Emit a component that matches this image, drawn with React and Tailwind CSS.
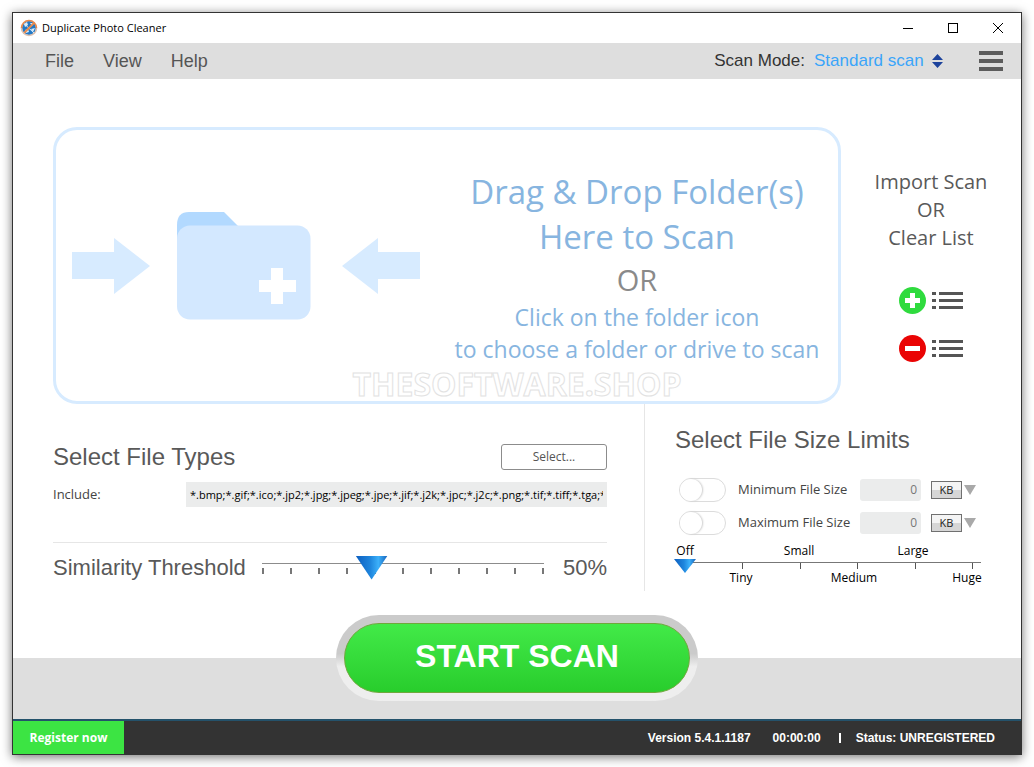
import { useState } from "react";

const fileTypes =
  "*.bmp;*.gif;*.ico;*.jp2;*.jpg;*.jpeg;*.jpe;*.jif;*.j2k;*.jpc;*.j2c;*.png;*.tif;*.tiff;*.tga;*.wbmp;*.webp";

const AppLogo = () => (
  <svg width="18" height="18" viewBox="0 0 18 18" aria-hidden="true">
    <circle cx="9" cy="9" r="7" fill="#2279c6" />
    <path d="M4 5l3-2 1 3-3 2zM10 4h3l-1 3zM5 11l3-1 1 3-3 1zM11 10l4-1-2 4z" fill="#dcecf8" />
    <path d="M3.5 4L14 14" stroke="#dcecf8" strokeWidth="1" />
    <path d="M14.5 3.5l-11 11" stroke="#e98a4c" strokeWidth="1.8" />
    <path d="M1.5 9a7.5 7.5 0 0 1 15 0" fill="none" stroke="#e98a4c" strokeWidth="1.6" />
    <path d="M1.5 9a7.5 7.5 0 0 0 15 0" fill="none" stroke="#dcc0b0" strokeWidth="1.6" />
  </svg>
);

const Arrow = ({ flip }) => (
  <svg width="78" height="56" viewBox="0 0 78 56" className={flip ? "-scale-x-100" : ""} aria-hidden="true">
    <path d="M0 14h42V0l36 28-36 28V41H0z" fill="#d7ebff" />
  </svg>
);

const Folder = () => (
  <svg width="134" height="108" viewBox="0 0 134 108" aria-hidden="true">
    <path d="M0 28V13Q0 0 12 0H47L62 15V28z" fill="#b2d9ff" />
    <rect y="13.5" width="133.5" height="94" rx="13" fill="#d3e8ff" />
    <path d="M94 56h12v12h13v12h-13v12H94V80H82V68h12z" fill="#fff" />
  </svg>
);

const ListIcon = () => (
  <svg width="31" height="19" viewBox="0 -1 31 19" fill="#555" aria-hidden="true">
    <path d="M0 0h4v3H0zM7 0h24v3H7zM0 7h4v3H0zM7 7h24v3H7zM0 14h4v3H0zM7 14h24v3H7z" />
  </svg>
);

const TitleBar = () => (
  <header className="flex h-[30px] items-center justify-between bg-white pl-[7px]">
    <div className="flex items-center gap-1">
      <AppLogo />
      <h1 className="text-[11px] text-black">Duplicate Photo Cleaner</h1>
    </div>
    <div className="flex h-full">
      <button aria-label="Minimize" className="flex w-[45px] items-center justify-center">
        <span className="w-[10px] border-t border-black" />
      </button>
      <button aria-label="Maximize" className="flex w-[45px] items-center justify-center">
        <span className="size-[10px] border border-black" />
      </button>
      <button aria-label="Close" className="flex w-[46px] items-center justify-center">
        <svg width="10" height="10" viewBox="0 0 10 10" stroke="#000" aria-hidden="true">
          <path d="M0 0l10 10M10 0L0 10" />
        </svg>
      </button>
    </div>
  </header>
);

const MenuBar = () => (
  <div className="flex h-9 items-center justify-between bg-[#dedede] pr-[18px] pl-8 font-['Liberation_Sans',sans-serif]">
    <nav className="flex gap-[29px] text-[18px] text-[#555]">
      <button>File</button>
      <button>View</button>
      <button>Help</button>
    </nav>
    <div className="flex items-center">
      <label htmlFor="scan-mode" className="mr-[9px] text-[17px] text-[#333]">
        Scan Mode:
      </label>
      <select id="scan-mode" className="appearance-none text-[17px] text-[#3aa5fa]">
        <option>Standard scan</option>
      </select>
      <svg width="11" height="14" viewBox="0 0 11 14" fill="#1d439c" className="ml-2" aria-hidden="true">
        <path d="M5.5 0L11 6H0zM5.5 14L0 8h11z" />
      </svg>
      <button aria-label="Menu" className="ml-9 flex w-6 flex-col gap-1">
        <span className="h-1 bg-[#5c5c5c]" />
        <span className="h-1 bg-[#5c5c5c]" />
        <span className="h-1 bg-[#5c5c5c]" />
      </button>
    </div>
  </div>
);

const DropZone = () => (
  <section className="flex min-h-[277px] flex-1 items-start rounded-[24px] border-[3px] border-[#d7ebff] pt-[39px] pr-4 pl-4">
    <button aria-label="Choose a folder" className="mt-[43px] flex items-center gap-[27px]">
      <Arrow />
      <Folder />
      <span className="ml-1">
        <Arrow flip />
      </span>
    </button>
    <div className="flex-1 pl-8 text-center whitespace-nowrap text-[#87b5e0]">
      <p className="text-[33px] leading-[45px]">Drag &amp; Drop Folder(s)</p>
      <p className="text-[33px] leading-[45px]">Here to Scan</p>
      <p className="text-[29px] leading-[42px] text-[#8a8a8a]">OR</p>
      <p className="text-[23px] leading-8">Click on the folder icon</p>
      <p className="text-[23px] leading-8">to choose a folder or drive to scan</p>
    </div>
  </section>
);

const ImportPanel = () => (
  <aside className="flex w-[180px] flex-col items-center pt-[41px]">
    <p className="text-center text-[20px] leading-7 text-[#595959]">
      Import Scan
      <br />
      OR
      <br />
      Clear List
    </p>
    <button aria-label="Import scan" className="mt-[35px] flex items-center gap-[6px]">
      <svg width="27" height="27" viewBox="0 0 27 27" aria-hidden="true">
        <circle cx="13.5" cy="13.5" r="13.5" fill="#2fdb3e" />
        <path d="M11 6h5v5h5v5h-5v5h-5v-5H6v-5h5z" fill="#fff" />
      </svg>
      <ListIcon />
    </button>
    <button aria-label="Clear list" className="mt-[21px] flex items-center gap-[6px]">
      <svg width="27" height="27" viewBox="0 0 27 27" aria-hidden="true">
        <circle cx="13.5" cy="13.5" r="13.5" fill="#ea0404" />
        <path d="M6 11h15v5H6z" fill="#fff" />
      </svg>
      <ListIcon />
    </button>
  </aside>
);

const FileTypes = () => {
  const [threshold, setThreshold] = useState(50);

  return (
    <section className="flex-1 pt-[39px] pr-[37px]">
      <div className="flex items-center justify-between">
        <h2 className="font-['Liberation_Sans',sans-serif] text-[24px] leading-7 text-[#595959]">Select File Types</h2>
        <button className="h-[26px] w-[106px] rounded-[3px] border border-[#8c8c8c] text-[12px] text-[#555]">
          Select...
        </button>
      </div>
      <div className="mt-[11px] flex items-center">
        <label htmlFor="include" className="w-[133px] text-[13px] text-[#444]">
          Include:
        </label>
        <input
          id="include"
          readOnly
          defaultValue={fileTypes}
          className="h-[25px] min-w-0 flex-1 bg-[#ebecec] px-1 text-[11px] text-black"
        />
      </div>
      <div className="mt-[35px] flex items-center border-t border-[#e6e6e6] pt-[11px] font-['Liberation_Sans',sans-serif] text-[#595959]">
        <label htmlFor="threshold" className="text-[22px] leading-7">
          Similarity Threshold
        </label>
        <div className="relative ml-4 flex-1">
          <div className="flex justify-between border-t border-[#8c8c8c] pt-1">
            {Array.from({ length: 11 }, (_, i) => (
              <span key={i} className="h-[6px] w-[2px] bg-[#777]" />
            ))}
          </div>
          {/* thumb hangs over the ruler */}
          <input
            id="threshold"
            type="range"
            min="20"
            max="100"
            value={threshold}
            onChange={(e) => setThreshold(Number(e.target.value))}
            className="absolute -top-[7px] left-0 h-6 w-full appearance-none bg-transparent [&::-webkit-slider-thumb]:h-6 [&::-webkit-slider-thumb]:w-8 [&::-webkit-slider-thumb]:appearance-none [&::-webkit-slider-thumb]:bg-[linear-gradient(to_right,#0d5fc0,#1f86dd_45%,#3cb0fa_70%,#1560b8)] [&::-webkit-slider-thumb]:[clip-path:polygon(0_0,100%_0,50%_100%)]"
          />
        </div>
        <output className="ml-[19px] text-[22px] leading-7">{threshold}%</output>
      </div>
    </section>
  );
};

const SizeRow = ({ id, label }) => (
  <div className="flex h-[33px] items-center">
    <input
      id={id}
      type="checkbox"
      className="ml-1 h-6 w-[47px] appearance-none rounded-full border border-[#dcdcdc] bg-white before:block before:size-[22px] before:rounded-full before:bg-white before:shadow-[1px_0_2px_#ccc] checked:before:ml-[23px]"
    />
    <label htmlFor={id} className="ml-3 w-[122px] text-[13px] whitespace-nowrap text-[#444]">
      {label}
    </label>
    <input
      aria-label={`${label} value`}
      defaultValue="0"
      className="h-[22px] w-[61px] rounded-[3px] bg-[#ebecec] px-1 text-right text-[12px] text-[#777]"
    />
    <select
      aria-label={`${label} unit`}
      className="ml-[10px] h-[18px] w-[31px] appearance-none border border-[#707070] bg-linear-to-b from-[#f4f4f4] from-50% to-[#d6d6d6] to-50% text-center text-[11px] leading-4 text-[#222]"
    >
      <option>KB</option>
      <option>MB</option>
    </select>
    <svg width="12" height="10" viewBox="0 0 12 10" className="ml-[2px]" aria-hidden="true">
      <path d="M0 0h12L6 10z" fill="#a9a9a9" />
    </svg>
  </div>
);

const SizeLimits = () => (
  <section className="w-[377px] border-l border-[#e6e6e6] pt-[22px] pr-10 pb-[5px] pl-[30px]">
    <h2 className="font-['Liberation_Sans',sans-serif] text-[24px] leading-7 text-[#595959]">Select File Size Limits</h2>
    <div className="mt-[19px]">
      <SizeRow id="min-size" label="Minimum File Size" />
      <SizeRow id="max-size" label="Maximum File Size" />
    </div>
    <div className="text-[12px] leading-4 text-black">
      <div className="mt-1 mr-[68px] ml-[10px] flex justify-between">
        <span className="flex w-0 justify-center">Off</span>
        <span className="flex w-0 justify-center">Small</span>
        <span className="flex w-0 justify-center">Large</span>
      </div>
      <div className="relative mt-[3px] ml-[10px] h-2 border-t border-[#777]">
        <div className="mr-2 flex justify-between">
          {Array.from({ length: 6 }, (_, i) => (
            <span key={i} className="h-[6px] w-px bg-[#555]" />
          ))}
        </div>
        <input
          aria-label="File size range"
          type="range"
          min="0"
          max="5"
          defaultValue="0"
          className="absolute -top-1 -left-[11px] h-[14px] w-[311px] appearance-none bg-transparent [&::-webkit-slider-thumb]:h-[14px] [&::-webkit-slider-thumb]:w-[22px] [&::-webkit-slider-thumb]:appearance-none [&::-webkit-slider-thumb]:bg-[linear-gradient(to_right,#0d5fc0,#1f86dd_45%,#3cb0fa_70%,#1560b8)] [&::-webkit-slider-thumb]:[clip-path:polygon(0_0,100%_0,50%_100%)]"
        />
      </div>
      <div className="mr-[14px] ml-[66px] flex justify-between">
        <span className="flex w-0 justify-center">Tiny</span>
        <span className="flex w-0 justify-center">Medium</span>
        <span className="flex w-0 justify-center">Huge</span>
      </div>
    </div>
  </section>
);

const App = () => {
  return (
    <div className="flex min-h-screen bg-white p-3 font-['Open_Sans',sans-serif]">
      <div className="relative flex flex-1 flex-col border border-[#333] bg-white shadow-[0_2px_10px_rgba(0,0,0,0.55)]">
        <TitleBar />
        <MenuBar />
        <main className="flex-1 pt-12 pb-[66px] pl-10">
          <div className="relative flex">
            <DropZone />
            <ImportPanel />
            {/* watermark over the lower edge of the drop zone */}
            <p className="pointer-events-none absolute inset-x-0 bottom-0 pr-10 text-center text-[32px] leading-10 font-bold text-white [-webkit-text-stroke:1px_#e2e2e2]">
              THESOFTWARE.SHOP
            </p>
          </div>
          <div className="flex">
            <FileTypes />
            <SizeLimits />
          </div>
        </main>
        <div className="flex h-[61px] justify-center bg-[#dedede]">
          <button className="-mt-[43px] flex h-[86px] w-[362px] items-center justify-center rounded-full bg-linear-to-b from-[#cbcbcb] from-45% to-[#eee] to-60%">
            <span className="flex h-[70px] w-[346px] items-center justify-center rounded-full border border-[#6fa83c] bg-linear-to-b from-[#42ea48] to-[#28cd2c] pb-1 font-['Liberation_Sans',sans-serif] text-[32px] font-bold text-white">
              START SCAN
            </span>
          </button>
        </div>
        <footer className="flex h-[35px] items-stretch justify-between border-t-2 border-[#24526b] bg-[#333] text-white">
          <button className="w-[111px] bg-[#3ce443] text-[12px] font-bold">Register now</button>
          <div className="flex items-center pr-[26px] font-['Liberation_Sans',sans-serif] text-[12px] font-bold">
            <span>Version 5.4.1.1187</span>
            <span className="ml-[22px]">00:00:00</span>
            <span className="mr-[15px] ml-[18px] h-[10px] w-[2px] bg-white" />
            <span>Status: UNREGISTERED</span>
          </div>
        </footer>
      </div>
    </div>
  );
};

export default App;
